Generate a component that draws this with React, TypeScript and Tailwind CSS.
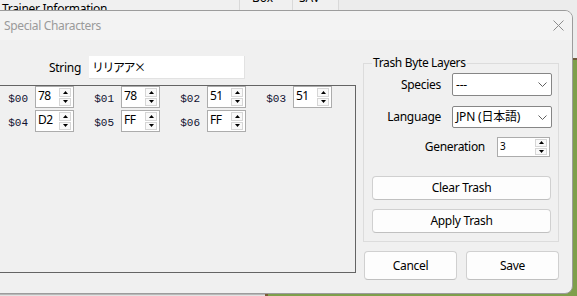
import React from "react";

const Arrow = ({ up }: { up: boolean }) => (
  <svg width="5" height="3" viewBox="0 0 5 3">
    <path d={up ? "M2.5 0 L5 3 L0 3 Z" : "M0 0 L5 0 L2.5 3 Z"} fill="#000" />
  </svg>
);

function Spin({ value, box, text }: { value: string; box: string; text: string }) {
  return (
    <div className={`flex items-stretch bg-white border border-[#acacac] ${box}`}>
      <div className={`flex-1 pl-[2px] ${text}`}>{value}</div>
      <div className="flex flex-col w-[12px] my-[1px] mr-[2px] gap-[1px]">
        <div className="flex-1 flex items-center justify-center border border-[#d6d6d6] bg-[#f9f9f9]">
          <Arrow up />
        </div>
        <div className="flex-1 flex items-center justify-center border border-[#d6d6d6] bg-[#f9f9f9]">
          <Arrow up={false} />
        </div>
      </div>
    </div>
  );
}

function Combo({ value }: { value: string }) {
  return (
    <div className="flex items-center justify-between w-[100px] h-full bg-white border border-[#868686] rounded-[2px] pl-[3px] pr-[4px]">
      <span className="text-[12px] tracking-[-0.2px] font-['Noto_Sans','Noto_Sans_CJK_JP',sans-serif]">{value}</span>
      <svg width="9" height="5" viewBox="0 0 9 5">
        <path d="M0.5 0.5 L4.5 4.5 L8.5 0.5" fill="none" stroke="#606060" strokeWidth="1" />
      </svg>
    </div>
  );
}

function Btn({ label, cls }: { label: string; cls: string }) {
  return (
    <div
      className={`flex items-center justify-center bg-[#fdfdfd] border border-[#d0d0d0] border-b-[#c0c0c0] rounded-[4px] text-[12px] tracking-[-0.3px] ${cls}`}
    >
      {label}
    </div>
  );
}

const cells = [
  ["$00", "78"],
  ["$01", "78"],
  ["$02", "51"],
  ["$03", "51"],
  ["$04", "D2"],
  ["$05", "FF"],
  ["$06", "FF"],
];

export default function App() {
  return (
    <div className="relative w-[577px] h-[296px] overflow-hidden font-['Noto_Sans',sans-serif] text-black text-[12px] leading-[16px]">
      {/* parent window */}
      <div className="flex flex-col w-full h-full bg-[#f0f0f0]">
        <div className="flex h-[58px] shrink-0">
          <div className="w-[239px] pl-[2px] pt-[1px] tracking-[-0.3px] overflow-hidden">Trainer Information</div>
          <div className="w-[53px] border-l border-[#d9d9d9] overflow-hidden">
            <div className="mt-[-10px] pl-[12px]">Box</div>
          </div>
          <div className="w-[46px] border-l border-[#d9d9d9] overflow-hidden">
            <div className="mt-[-10px] pl-[6px]">SAV</div>
          </div>
          <div className="flex-1 border-l border-[#d9d9d9] bg-[#ececec]" />
        </div>
        <div className="flex flex-1">
          <div className="w-[265px] flex flex-col justify-end">
            <div className="h-[2px] border-t border-[#b8b8b8] bg-[#e2e2e2]" />
          </div>
          <div className="flex-1 bg-[#7e9f4b] border-l-[3px] border-[#7a5a36] border-t-[2px] border-t-[#6b5a3a]" />
        </div>
      </div>

      {/* dialog */}
      <div className="absolute left-[-8px] top-[10px] w-[581px] h-[284px] rounded-[8px] border border-[#9c9c9c] bg-[#f0f0f0] overflow-hidden flex flex-col">
        <div className="h-[29px] shrink-0 bg-[#f3f3f3] flex items-center justify-between">
          <span className="pl-[11px] text-[#9a9a9a] tracking-[-0.35px]">Special Characters</span>
          <svg className="mr-[8px]" width="11" height="11" viewBox="0 0 11 11">
            <path d="M0.5 0.5 L10.5 10.5 M10.5 0.5 L0.5 10.5" stroke="#8c8c8c" strokeWidth="1" />
          </svg>
        </div>
        <div className="flex">
          {/* left column */}
          <div className="w-[363px] flex flex-col">
            <div className="flex items-center h-[23px] mt-[16px]">
              <div className="w-[88px] text-right tracking-[-0.3px]">String</div>
              <div className="ml-[8px] w-[156px] h-[23px] bg-white border-b border-r border-[#e2e2e2] flex items-center pl-[3px] text-[12px] tracking-[-1.5px] font-['Noto_Sans_CJK_JP',sans-serif]">
                リリアア×
              </div>
            </div>
            <div className="mt-[6px] h-[188px] border border-[#646464]">
              <div className="grid grid-cols-[86px_86px_86px_86px] gap-y-[2px] pl-[6px]">
                {cells.map(([l, v]) => (
                  <div key={l} className="flex items-center">
                    <div className="w-[35px] pr-[7px] mt-[3px] text-right font-['Liberation_Mono',monospace] text-[11px] text-[#101030]">
                      {l}
                    </div>
                    <Spin value={v} box="w-[39px] h-[22px]" text="text-[12px] leading-[18px] tracking-[-0.6px]" />
                  </div>
                ))}
              </div>
            </div>
          </div>
          {/* right column */}
          <div className="ml-[7px] w-[196px] flex flex-col">
            <div className="relative mt-[23px] h-[179px] border border-[#dcdcdc] pt-[9px] flex flex-col">
              <div className="absolute top-[-9px] left-[8px] px-[1px] bg-[#f0f0f0] tracking-[-0.35px]">Trash Byte Layers</div>
              <div className="flex items-center h-[23px]">
                <div className="w-[77px] text-right tracking-[-0.3px]">Species</div>
                <div className="ml-[11px] h-full">
                  <Combo value="---" />
                </div>
              </div>
              <div className="flex items-center h-[22px] mt-[10px]">
                <div className="w-[77px] text-right tracking-[-0.3px]">Language</div>
                <div className="ml-[11px] h-full">
                  <Combo value="JPN (日本語)" />
                </div>
              </div>
              <div className="flex items-center h-[20px] mt-[9px]">
                <div className="w-[121px] text-right tracking-[-0.3px]">Generation</div>
                <Spin value="3" box="ml-[12px] w-[53px] h-[20px]" text="text-[10px] leading-[17px]" />
              </div>
              <Btn label="Clear Trash" cls="mt-[19px] ml-[8px] w-[179px] h-[24px]" />
              <Btn label="Apply Trash" cls="mt-[9px] ml-[8px] w-[179px] h-[24px]" />
            </div>
            <div className="mt-[9px] pl-[1px] flex gap-[9px]">
              <Btn label="Cancel" cls="w-[93px] h-[29px]" />
              <Btn label="Save" cls="w-[93px] h-[29px]" />
            </div>
          </div>
        </div>
      </div>
    </div>
  );
}
